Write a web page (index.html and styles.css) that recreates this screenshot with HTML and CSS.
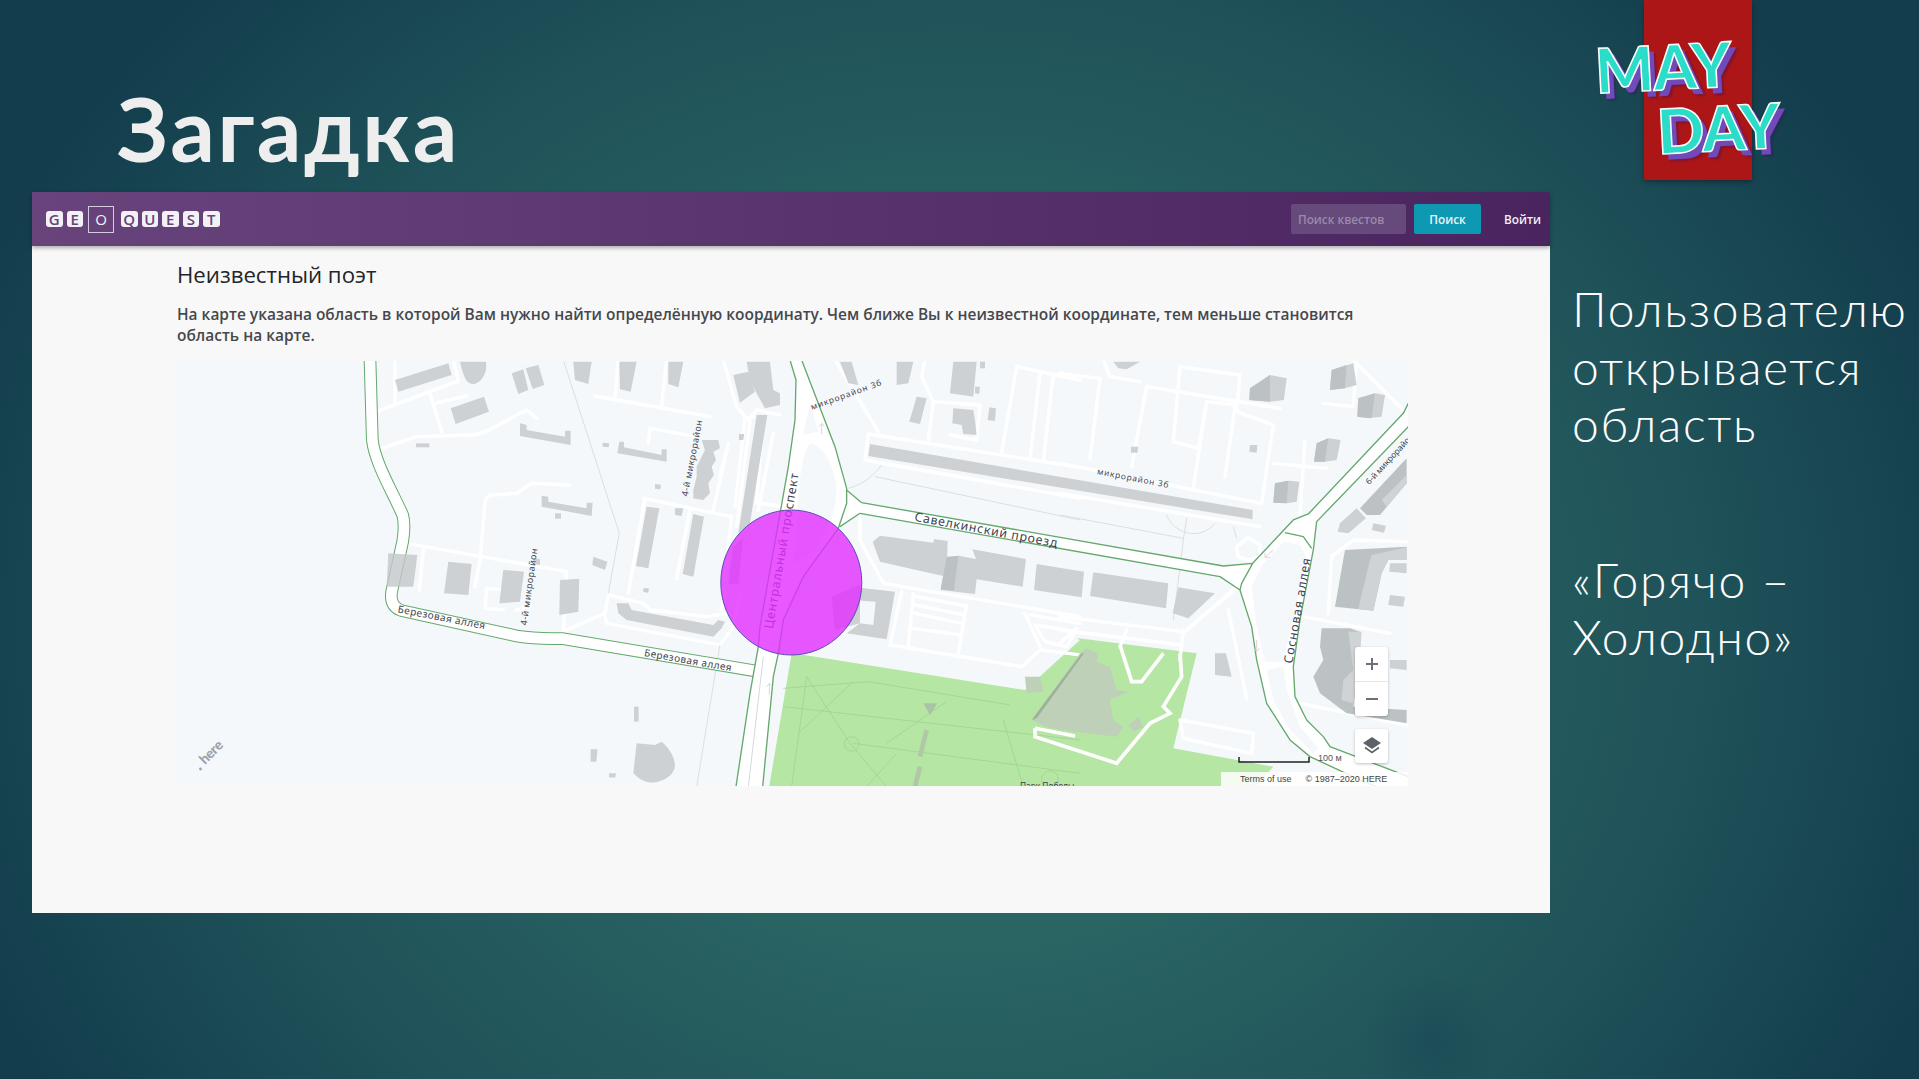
FILE: index.html
```html
<!DOCTYPE html>
<html lang="ru">
<head>
<meta charset="utf-8">
<title>Загадка</title>
<link rel="stylesheet" href="styles.css">
</head>
<body>
<div class="slide">
  <div class="ribbon"></div>
  <div class="mayday"><span class="may">MAY</span><span class="day">DAY</span></div>
  <header class="slide-head"><h1>Загадка</h1></header>
  <div class="slide-body">
    <section class="browser">
      <nav class="topbar">
        <div class="brand">
          <span class="tile">G</span><span class="tile">E</span><span class="tile tile-o">O</span><span class="tile">Q</span><span class="tile">U</span><span class="tile">E</span><span class="tile">S</span><span class="tile">T</span>
        </div>
        <div class="nav-right">
          <input class="search" placeholder="Поиск квестов">
          <span class="btn">Поиск</span>
          <span class="login">Войти</span>
        </div>
      </nav>
      <div class="content">
        <h2>Неизвестный поэт</h2>
        <p>На карте указана область в которой Вам нужно найти определённую координату. Чем ближе Вы к неизвестной координате, тем меньше становится<br>область на карте.</p>
        <div class="map">
          <svg class="map-svg" viewBox="177 361 1231 425" width="1231" height="425" xmlns="http://www.w3.org/2000/svg">
            <rect class="land" x="177" y="361" width="1231" height="425"/>
            <polygon class="park" points="791.7,653 1025,690 1080,640 1076.7,638 1196.7,653.3 1173.3,748.3 1273.3,766.7 1256.7,786 769.3,786"/>
            <!-- park paths (crop B) -->
            <g transform="translate(720 360) scale(.3333)" class="parklines">
              <path d="M190 1040L1080 1140M260 950L390 1150L500 1280M260 950L215 1280M235 1120L400 965M445 965L870 1035M445 965L190 985M400 1150L1080 1240M850 1080L910 1280M530 1180L440 1280M680 1025L500 1150"/>
              <circle cx="395" cy="1152" r="22"/>
              <circle cx="990" cy="1258" r="25"/>
            </g>
            <g transform="translate(720 360) scale(.3333)">
              <polygon class="spine" points="610,1030 652,1030 630,1066"/>
              <path class="spine-line" d="M620 1110L600 1190M600 1220L585 1280"/>
            </g>
            <!-- minor roads -->
            <g transform="translate(360 360) scale(.3333)" class="minor">
              <path d="M105 0V130M50 155L290 65M280 0L295 65M210 100L245 215M225 130L320 108M65 265L170 230L340 225C380 220 420 190 500 150L530 175"/>
              <path d="M775 0L765 110M920 0L905 135M705 108L1050 170M865 250L870 205L1010 230M1105 250L1060 450M850 415L1115 470M855 415L805 700M990 450L950 655M1115 470L1085 750"/>
              <path d="M140 550L620 635L610 815M190 570L178 690M360 600L345 680M360 600L375 430Q378 405 400 405L470 400L515 370L630 375"/>
              <path d="M380 685L375 745L430 750M380 685L450 690M470 750L510 740"/>
              <path d="M620 810L735 760L745 705L850 730L870 750L1040 770L1100 760M735 770L740 790L1080 855M1080 855L1120 800L1140 700"/>
              <path d="M1090 0L1130 140L1170 185L1130 500M1170 175L1190 150L1260 165M1210 170L1190 430M1210 430L1260 440"/>
            </g>
            <g transform="translate(360 360) scale(.3333)" class="thin">
              <path d="M610 0L778 520L745 700"/>
              <path d="M1080 855L1010 1280"/>
            </g>
            <g transform="translate(720 360) scale(.3333)" class="minor">
              <path d="M345 0L475 215M615 0L605 50L640 125L625 240M640 125L780 135L770 240L690 225"/>
              <path d="M445 222L1080 322M435 300L1080 415M445 222L435 300"/>
              <path d="M890 20L845 280M890 20L1080 60M960 40L930 295M1000 45L970 300"/>
              <path d="M420 470L420 540L490 670L1080 770M545 695L510 855L905 920L960 870L1080 885M580 700L565 860M740 735L715 880M590 710L735 738M585 735L730 765M585 760L725 790M580 805L720 825M915 760L960 860M930 765L1080 790M945 795L1065 815L1040 860L975 845Z"/>
              <path d="M160 220L115 450M125 430L190 440M75 175L100 170M25 250L0 350M75 175L45 440"/>
            </g>
            <g transform="translate(720 360) scale(.3333)" class="thin">
              <path d="M485 315C450 360 420 375 385 385M465 350L1080 480"/>
            </g>
            <g transform="translate(1060 360) scale(.3333)" class="minor">
              <path d="M0 40L120 55L90 295M130 0L150 50L240 65M360 20L340 245L415 265L440 125L530 135M360 20L540 45L530 155L640 195L605 430L0 310M260 80L660 145M260 80L215 320M640 310L800 325M735 245L720 460M400 385L440 125M525 140L495 350M880 0L1030 150M790 130L880 140L890 0M0 400L600 500"/>
              <path d="M505 750L560 1015M370 820L530 680M385 805L535 680M200 810L180 860M50 805L0 850M0 770L370 815M0 810L365 855M370 810L360 900M360 1080L580 1120L575 1180L370 1135ZM805 760L815 590L880 540L1040 545M730 770L990 820M720 1030L1040 1095"/>
            </g>
            <g transform="translate(1060 360) scale(.3333)" class="thin">
              <path d="M320 465C340 520 420 545 465 490M380 475L370 540L340 780M0 465L370 535M520 500L530 535"/>
            </g>
            <polygon class="roundabout" transform="translate(1060 360) scale(.3333)" points="530,560 565,533 600,555 600,590 565,600 535,590"/>
            <!-- buildings -->
            <g transform="translate(360 360) scale(.3333)" class="bld">
              <polygon points="105,60 265,10 275,45 115,95"/>
              <path d="M300 5H378C385 50 350 80 330 70C315 65 305 30 300 5Z"/>
              <polygon points="455,40 490,28 505,90 475,102"/>
              <polygon points="497,25 535,15 553,75 518,87"/>
              <polygon points="272,145 372,110 387,155 287,192"/>
              <polygon points="480,190 500,195 500,210 615,230 615,212 632,212 632,255 480,228"/>
              <polygon points="168,250 208,250 208,262 168,262"/>
              <polygon points="640,5 695,5 685,72 645,60"/>
              <polygon points="778,5 830,5 812,95 780,88"/>
              <polygon points="925,5 970,5 955,82 925,72"/>
              <polygon points="778,245 792,245 792,262 905,285 905,268 920,268 920,305 772,280"/>
              <polygon points="728,248 748,250 746,262 728,260"/>
              <polygon points="545,407 565,410 565,425 680,445 680,428 698,428 695,468 545,440"/>
              <polygon points="585,460 603,460 603,476 585,476"/>
              <polygon points="885,372 903,374 901,388 885,386"/>
              <polygon points="1025,240 1075,240 1080,265 1060,275 1068,300 1055,320 1062,345 1045,370 1050,400 1030,420 1000,415 1000,390 1010,350 1010,320 1035,270"/>
              <polygon points="945,445 970,445 965,468 945,465"/>
              <polygon points="860,440 898,445 865,625 828,618"/>
              <polygon points="1000,462 1032,470 1000,650 968,642"/>
              <polygon points="1137,222 1153,222 1150,240 1137,240"/>
              <polygon points="700,590 742,605 735,630 697,615"/>
              <polygon points="850,685 867,685 865,698 850,696"/>
              <polygon points="265,605 335,612 325,705 252,700"/>
              <polygon points="430,630 492,635 480,725 418,730"/>
              <polygon points="520,595 540,598 540,615 520,612"/>
              <polygon points="600,660 658,656 655,755 598,765"/>
              <polygon points="770,730 805,730 815,750 1060,795 1075,780 1095,785 1085,805 1060,830 800,780 775,760"/>
              <polygon points="1120,45 1165,35 1185,95 1140,128"/>
              <polygon points="1160,5 1230,5 1240,90 1260,100 1260,135 1215,145 1190,100 1170,60"/>
              <polygon points="1190,165 1222,165 1170,490 1135,520"/>
              <polygon points="1120,560 1150,530 1135,672 1105,672"/>
              <polygon points="822,1040 836,1040 836,1085 822,1085"/>
              <polygon points="692,1168 713,1168 709,1205 692,1205"/>
              <polygon points="747,1240 768,1240 766,1253 747,1253"/>
              <path d="M830 1150L885 1155L905 1145C935 1170 945 1200 945 1215C945 1245 910 1268 870 1268C850 1265 835 1255 820 1240Z"/>
            </g>
            <g transform="translate(720 360) scale(.3333)" class="bld">
              <polygon points="530,5 580,5 565,70 530,75"/>
              <polygon points="700,5 770,5 760,110 690,100"/>
              <polygon points="780,5 795,5 795,25 780,25"/>
              <polygon points="765,80 780,80 778,102 765,100"/>
              <polygon points="590,110 620,115 600,192 568,185"/>
              <polygon points="700,145 760,150 765,180 770,225 730,222 725,195 697,190"/>
              <polygon points="808,142 828,145 825,183 803,180"/>
              <polygon points="360,5 395,5 415,75 385,70"/>
              <polygon points="458,545 480,527 640,548 642,537 683,543 680,650 632,640 480,605"/>
              <polygon points="680,590 715,587 768,597 757,568 918,597 908,680 770,658 765,702 662,690"/>
              <polygon class="bld-dark" points="680,592 715,587 702,692 662,688"/>
              <polygon points="395,680 525,695 500,838 380,820 420,790 460,795 467,725 395,720"/>
              <polygon points="335,710 420,675 420,790 345,810"/>
            </g>
            <g transform="translate(1060 360) scale(.3333)" class="bld">
              <polygon points="-570,252 578,450 578,478 -575,288"/>
              <polygon points="-70,612 72,635 65,712 -78,690"/>
              <polygon points="570,85 630,45 680,55 672,120 630,125 568,120"/>
              <polygon class="bld-dark" points="570,85 630,45 630,125 568,120"/>
              <polygon points="815,30 880,10 890,75 855,85 810,90"/>
              <polygon class="bld-dark" points="815,30 860,15 855,85 810,90"/>
              <polygon points="895,115 945,100 975,105 965,170 925,175 892,170"/>
              <polygon class="bld-dark" points="895,115 945,100 935,175 892,170"/>
              <polygon points="770,250 805,235 842,240 830,300 795,305 762,305"/>
              <polygon class="bld-dark" points="770,250 805,235 795,305 762,305"/>
              <polygon points="645,370 685,362 718,365 710,425 680,430 640,428"/>
              <polygon class="bld-dark" points="645,370 685,362 680,430 640,428"/>
              <polygon points="570,255 592,255 590,278 568,275"/>
              <polygon points="213,260 235,260 232,278 213,278"/>
              <polygon points="160,5 240,5 200,28 175,25"/>
              <polygon points="100,637 325,670 318,745 90,708"/>
              <polygon points="355,682 465,700 385,775 338,760"/>
              <polygon points="465,880 498,880 515,950 465,945"/>
              <polygon class="bld-dark" points="855,570 1040,560 1040,600 985,600 965,640 940,752 825,740"/>
              <polygon class="bld-light" points="935,585 1040,562 1040,600 985,600 965,640 940,752 895,746 925,620"/>
              <polygon points="1040,610 990,610 988,635 1040,640"/>
              <polygon points="990,705 1035,710 1030,740 985,735"/>
              <polygon points="840,490 890,445 918,475 865,520 833,515"/>
              <polygon class="bld-dark" points="900,445 1040,295 1040,370 960,465 920,465"/>
              <polygon class="bld-light" points="965,420 1040,345 1040,370 980,440"/>
              <polygon points="940,490 978,497 972,518 935,510"/>
              <polygon class="bld-dark" points="785,805 870,805 900,815 890,960 880,1040 1040,1050 1040,1090 860,1060 820,1030 780,1000 760,950 790,900 780,860"/>
              <polygon class="bld-light" points="865,815 905,815 895,960 880,1030 845,1020 850,960 880,930"/>
              <polygon points="990,900 1040,900 1040,930 990,925"/>
            </g>
            <!-- park building and paths -->
            <g transform="translate(1060 360) scale(.3333)">
              <polygon class="church" points="-85,1080 60,880 80,865 115,880 110,905 150,920 170,990 205,995 150,1020 160,1080 190,1100 170,1130 0,1110 -40,1100"/>
              <polygon class="church-dark" points="-85,1080 65,880 72,880 -70,1075"/>
              <polygon class="church" points="205,1095 235,1070 250,1100 220,1115"/>
              <polygon class="church" points="-105,950 -60,950 -50,995 -100,1000"/>
              <path class="parkpath" d="M-75 1105L45 1128M-75 1105L-75 1130L170 1210L270 1090L330 1060L310 1040L365 950L360 880M180 855L215 965L245 965L310 880"/>
            </g>
            <!-- arterial roads -->
            <path class="art-edge" transform="translate(360 360) scale(.3333)" d="M30 0L37 240C45 310 100 400 128 465C135 490 132 520 128 545L95 695C90 730 105 745 125 752L470 828C530 838 560 835 610 836L1200 935"/>
            <path class="art-fill" transform="translate(360 360) scale(.3333)" d="M30 0L37 240C45 310 100 400 128 465C135 490 132 520 128 545L95 695C90 730 105 745 125 752L470 828C530 838 560 835 610 836L1206 936"/>
            <polygon class="bld-over" transform="translate(360 360) scale(.3333)" points="85,580 172,585 160,680 80,680"/>
            <g transform="translate(720 360) scale(.3333)">
              <polygon class="road" points="210,0 228,60 225,180 205,320 120,800 115,860 90,1000 48,1280 128,1280 160,950 175,880 190,780 250,650 355,505 425,460 425,428 380,385 345,260 270,65 245,0"/>
              <path class="island" d="M270 250C240 290 235 400 232 480C230 540 225 590 215 610C280 600 340 510 350 400C350 340 320 260 270 250Z"/>
              <polygon class="island" points="250,225 270,125 295,215"/>
              <path class="edge" d="M210 0L228 60L225 180L205 320L120 800L115 860L90 1000L48 1280M128 1280L160 950L175 880L190 780L250 650L355 505L380 430L380 385L345 260L270 65L245 0M380 390L425 428M360 500L420 460"/>
              <path class="arrow" d="M305 222V190M297 200L305 190L313 200M148 1005V970M140 980L148 970L156 980M130 890L85 1280"/>
            </g>
            <g transform="translate(1060 360) scale(.3333)">
              <polygon class="road" points="-595,428 490,618 578,610 545,690 480,650 -600,460"/>
              <polygon class="road" points="578,610 700,480 745,462 1030,160 1045,130 1045,200 770,485 760,570 720,780 700,920 705,1010 740,1080 790,1130 810,1160 1045,1250 1045,1280 950,1280 900,1260 750,1190 690,1140 620,1030 590,900 575,800 540,690"/>
              <polygon class="island" points="610,610 670,545 720,555 738,590 700,780 670,905 615,905 590,800 575,680"/>
              <polygon class="island" points="620,930 670,920 680,990 720,1100 775,1165 760,1180 690,1110 640,1020"/>
              <path class="edge" d="M-595 428L490 618L578 610M-600 460L480 650L540 690M578 610L700 480L745 462L1030 160L1045 130M1045 200L770 485L760 570L720 780L700 920L705 1010L740 1080L790 1130L810 1160L1045 1250M540 690L575 800L590 900L620 1030L690 1140L750 1190L900 1260L950 1280M578 610L545 670L540 690M675 518L730 530L755 565"/>
              <path class="arrow arrow-pink" d="M640 570L615 592M615 578V592H630M590 840V875M582 865L590 875L598 865"/>
            </g>
            <!-- labels -->
            <g transform="translate(360 360) scale(.3333)" class="lbl">
              <text transform="translate(112 757) rotate(11)" font-size="30" textLength="266">Березовая аллея</text>
              <text transform="translate(851 888) rotate(10)" font-size="30" textLength="266">Березовая аллея</text>
              <text transform="translate(500 797) rotate(-82)" font-size="27" textLength="232">4-й микрорайон</text>
              <text transform="translate(983 410) rotate(-79)" font-size="27" textLength="232">4-й микрорайон</text>
            </g>
            <g transform="translate(720 360) scale(.3333)" class="lbl">
              <text transform="translate(158 808) rotate(-80.5)" font-size="37" textLength="472">Центральный проспект</text>
              <text transform="translate(276 150) rotate(-19.6)" font-size="25" textLength="223">микрорайон 3б</text>
              <text transform="translate(582 482) rotate(10.6)" font-size="37" textLength="435">Савелкинский проезд</text>
              <text transform="translate(900 1288)" font-size="25">Парк Победы</text>
            </g>
            <g transform="translate(1060 360) scale(.3333)" class="lbl">
              <text transform="translate(110 342) rotate(11)" font-size="25" textLength="218">микрорайон 3б</text>
              <text transform="translate(928 375) rotate(-47)" font-size="25">6-й микрорайон</text>
              <text transform="translate(697 912) rotate(-80)" font-size="37" textLength="320">Сосновая аллея</text>
            </g>
            <text class="here" transform="translate(205 765) rotate(-45)">here</text>
            <circle class="here-dot" cx="200.5" cy="769" r="1.4"/>
            <!-- quest area -->
            <ellipse class="area" cx="791.3" cy="582.5" rx="70.5" ry="72.5"/>
            <!-- scale -->
            <path class="scale" d="M1239 757V762H1309V757"/>
          </svg>
          <span class="scale-label">100 м</span>
          <div class="zoom-ctl">
            <span class="zoom-btn">
              <svg width="14" height="14" viewBox="0 0 14 14"><path class="ctl-icon" d="M7 1V13M1 7H13"/></svg>
            </span>
            <span class="zoom-btn">
              <svg width="14" height="14" viewBox="0 0 14 14"><path class="ctl-icon" d="M1 7H13"/></svg>
            </span>
          </div>
          <div class="layers-ctl">
            <svg width="20" height="18" viewBox="0 0 20 18"><path class="layer-top" d="M10 0L19 6L10 12L1 6Z"/><path class="layer-bottom" d="M3 10.5L10 15.5L17 10.5"/></svg>
          </div>
          <div class="attrib"><span>Terms of use</span><span>© 1987–2020 HERE</span></div>
        </div>
      </div>
    </section>
    <aside class="side">
      <p>Пользователю<br>открывается<br>область</p>
      <p>«Горячо –<br>Холодно»</p>
    </aside>
  </div>
</div>
</body>
</html>
```
FILE: styles.css
```css
* { box-sizing: border-box; }
html, body { margin: 0; padding: 0; }
body { width: 1919px; height: 1079px; overflow: hidden; background: #143f4f; }

.slide {
  position: relative;
  width: 1919px;
  height: 1079px;
  overflow: hidden;
  background:
    radial-gradient(circle 70px at 1432px 1040px, rgba(20, 62, 82, .35), rgba(20, 62, 82, 0)),
    radial-gradient(ellipse 55% 85% at 50% 58%, #33716a 0%, #2a6463 35%, #1f5259 70%, #133d4d 100%);
}

.ribbon {
  position: absolute;
  left: 1644px;
  top: 0;
  width: 108px;
  height: 180px;
  background: #ac1616;
  box-shadow: 0 2px 5px rgba(0, 0, 0, .35);
}

.mayday {
  position: absolute;
  left: 0;
  top: 0;
  font-family: "Lato", sans-serif;
  font-weight: 900;
  color: #2bdcc8;
}
.mayday span {
  position: absolute;
  font-size: 62px;
  line-height: 62px;
  letter-spacing: -1px;
  -webkit-text-stroke: 1.5px #fff;
  text-shadow: 5px 6px 0 #7149b9, 7px 8px 2px rgba(60, 20, 90, .4);
}
.may { left: 1595px; top: 35px; transform: rotate(-3deg); }
.day { left: 1657px; top: 96px; transform: rotate(-3deg); }

.slide-head { height: 192px; padding: 83px 0 0 117px; }
.slide-head h1 {
  margin: 0;
  font-family: "Lato", sans-serif;
  font-weight: 700;
  font-size: 88px;
  line-height: 90px;
  letter-spacing: 2.6px;
  color: #eeeeee;
}

.slide-body { display: flex; align-items: flex-start; padding-left: 32px; }

.browser {
  width: 1518px;
  height: 721px;
  background: #f8f8f9;
  display: flex;
  flex-direction: column;
  font-family: "Open Sans", sans-serif;
}

.topbar {
  height: 54px;
  flex: none;
  display: flex;
  align-items: center;
  justify-content: space-between;
  padding: 0 9px 0 14px;
  background: linear-gradient(90deg, #69447c 0%, #5e3b73 30%, #4a245e 100%);
  box-shadow: 0 2px 4px rgba(0, 0, 0, .3);
  position: relative;
}

.brand { display: flex; align-items: center; gap: 4px; }
.tile {
  width: 16.5px;
  height: 16.5px;
  border-radius: 3px;
  background: #f4f1f6;
  color: #64427a;
  font-size: 15px;
  font-weight: 600;
  line-height: 16.5px;
  text-align: center;
}
.tile.tile-o {
  width: 26px;
  height: 27px;
  margin: 0 3px 0 1px;
  background: transparent;
  border: 1px solid #d7cbdf;
  border-radius: 0;
  color: #f4f1f6;
  font-weight: 400;
  line-height: 25px;
}

.nav-right { display: flex; align-items: center; }
.search {
  width: 115px;
  height: 30px;
  padding: 0 7px;
  border: 0;
  border-radius: 2px;
  background: #664a7b;
  font: 600 11.8px "Open Sans", sans-serif;
}
.search::placeholder { color: #9c89aa; opacity: 1; }
.btn {
  width: 67px;
  height: 30px;
  margin-left: 8px;
  border-radius: 2px;
  background: #0f98b1;
  color: #e9f7fa;
  font-size: 11.8px;
  font-weight: 600;
  line-height: 30px;
  text-align: center;
}
.login {
  margin-left: 23px;
  color: #f4f0f6;
  font-size: 11.8px;
  font-weight: 600;
}

.content { padding: 0 0 0 145px; }
.content h2 {
  margin: 15px 0 0;
  font-size: 22.2px;
  font-weight: 400;
  line-height: 28px;
  color: #222529;
}
.content p {
  margin: 15px 0 0;
  font-size: 15.48px;
  font-weight: 600;
  line-height: 21px;
  color: #45484c;
  white-space: nowrap;
}

.map {
  position: relative;
  width: 1231px;
  height: 425px;
  margin-top: 15px;
  overflow: hidden;
}
.map-svg { display: block; }

.land { fill: #f5f8fb; }
.road { fill: #ffffff; }
.island { fill: #f5f8fb; }
.park { fill: #b6e6a4; }
.parklines { fill: none; stroke: #a2d392; stroke-width: 2.5; }
.spine { fill: #a9c4a4; }
.spine-line { fill: none; stroke: #aec8a8; stroke-width: 14; }
.minor { fill: none; stroke: #ffffff; stroke-width: 10; stroke-linejoin: round; stroke-linecap: round; }
.thin { fill: none; stroke: #d9dfe1; stroke-width: 3; }
.roundabout { fill: #f5f8fb; stroke: #fff; stroke-width: 10; }
.bld { fill: #cdd1d3; }
.bld-dark { fill: #bcc2c4; }
.bld-light { fill: #cfd3d5; }
.bld-over { fill: #c3c7c9; fill-opacity: .8; }
.church { fill: #bed0b8; }
.church-dark { fill: #9db099; }
.parkpath { fill: none; stroke: #ffffff; stroke-width: 11; stroke-linejoin: miter; }
.art-edge { fill: none; stroke: #64a86c; stroke-width: 38; stroke-linejoin: round; }
.art-fill { fill: none; stroke: #ffffff; stroke-width: 32; stroke-linejoin: round; }
.edge { fill: none; stroke: #64a86c; stroke-width: 4; stroke-linejoin: round; }
.arrow { fill: none; stroke: #d5d9dc; stroke-width: 3; }
.arrow-pink { stroke: #e4cfd6; }
.lbl text { font-family: "Noto Sans", "Open Sans", sans-serif; fill: #3c4450; }
.here { font-family: "Lato", sans-serif; font-size: 14px; font-weight: 900; letter-spacing: -.4px; fill: #9ea2a5; }
.here-dot { fill: #9ea2a5; }
.area { fill: #e22dff; fill-opacity: .8; stroke: #5a4bb8; stroke-width: 1; }
.scale { fill: none; stroke: #222; stroke-width: 1.5; }

.scale-label {
  position: absolute;
  left: 1141px;
  top: 392px;
  font: 9px "Liberation Sans", sans-serif;
  color: #555;
}

.zoom-ctl {
  position: absolute;
  left: 1178px;
  top: 286px;
  width: 33px;
  height: 69px;
  display: flex;
  flex-direction: column;
  border-radius: 3px;
  background: #fff;
  box-shadow: 0 1px 3px rgba(0, 0, 0, .25);
}
.zoom-btn { flex: 1; display: flex; align-items: center; justify-content: center; }
.zoom-btn + .zoom-btn { border-top: 1px solid #e4e6e8; }
.ctl-icon { fill: none; stroke: #6b7076; stroke-width: 2; }

.layers-ctl {
  position: absolute;
  left: 1178px;
  top: 368px;
  width: 33px;
  height: 34px;
  display: flex;
  align-items: center;
  justify-content: center;
  border-radius: 3px;
  background: #fff;
  box-shadow: 0 1px 3px rgba(0, 0, 0, .25);
}
.layer-top { fill: #5d6268; }
.layer-bottom { fill: none; stroke: #5d6268; stroke-width: 1.6; }

.attrib {
  position: absolute;
  right: 0;
  bottom: 0;
  width: 187px;
  height: 14px;
  padding-left: 19px;
  display: flex;
  gap: 14px;
  background: rgba(255, 255, 255, .85);
  font: 9px/14px "Liberation Sans", sans-serif;
  color: #444;
}

.side {
  padding: 88px 0 0 22px;
  font-family: "Lato", sans-serif;
  font-weight: 300;
  font-size: 48px;
  line-height: 57.5px;
  letter-spacing: 1.7px;
  color: #ffffff;
  white-space: nowrap;
}
.side p { margin: 0 0 98px; }
```
